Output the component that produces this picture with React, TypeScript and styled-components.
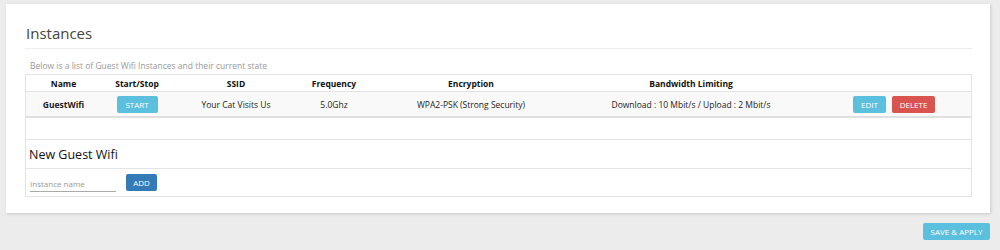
import React from 'react';
import styled, { createGlobalStyle } from 'styled-components';

const GlobalStyle = createGlobalStyle`
  html, body {
    margin: 0;
    padding: 0;
    background: #ececec;
    font-family: "Open Sans", "Liberation Sans", sans-serif;
    color: #222;
  }
`;

const Page = styled.div`
  width: 1000px;
  height: 250px;
  padding: 4px 10px 0 6px;
  box-sizing: border-box;
  display: flex;
  flex-direction: column;
`;

const Card = styled.div`
  background: #fff;
  box-shadow: 1px 1px 3px rgba(0, 0, 0, 0.15);
  padding: 19px 18px 18px 19px;
  height: 209px;
  box-sizing: border-box;
`;

const Title = styled.h2`
  margin: 0;
  font-size: 15px;
  font-weight: 400;
  color: #444;
  line-height: 20px;
  padding-left: 1px;
`;

const Rule = styled.hr`
  border: 0;
  border-top: 1px solid #eee;
  margin: 5px 0 0 0;
`;

const Lead = styled.div`
  font-size: 8.5px;
  color: #999;
  padding: 8px 0 0 5px;
  line-height: 17px;
`;

const Box = styled.div`
  border: 1px solid #e3e3e3;
`;

const Table = styled.table`
  width: 100%;
  table-layout: fixed;
  border-collapse: collapse;
  font-size: 8.5px;
`;

const Th = styled.th`
  font-weight: 700;
  text-align: center;
  height: 16px;
  padding: 0;
  border-bottom: 1px solid #e3e3e3;
  color: #111;
`;

const Row = styled.tr`
  background: #f9f9f9;
  border-bottom: 2px solid #e0e0e0;
`;

const Td = styled.td<{ $bold?: boolean }>`
  text-align: center;
  height: 24px;
  padding: 0;
  font-weight: ${(p) => (p.$bold ? 700 : 400)};
  color: #222;
`;

const Spacer = styled.div`
  height: 21px;
  border-bottom: 1px solid #e3e3e3;
`;

const Section = styled.div`
  height: 28px;
  display: flex;
  align-items: center;
  padding-left: 3px;
  font-size: 12.5px;
  color: #111;
  border-bottom: 1px solid #e3e3e3;
`;

const AddRow = styled.div`
  height: 27px;
  display: flex;
  align-items: center;
  gap: 10px;
  padding-left: 4px;
`;

const Input = styled.input`
  width: 86px;
  height: 14px;
  border: 0;
  border-bottom: 1px solid #aaa;
  font-family: inherit;
  font-size: 8px;
  padding: 0;
  outline: none;
  margin-top: 3px;
  &::placeholder {
    color: #999;
  }
`;

const Button = styled.button<{ $bg: string; $w: number }>`
  background: ${(p) => p.$bg};
  color: #fff;
  border: 0;
  border-radius: 2px;
  height: 17px;
  width: ${(p) => p.$w}px;
  font-family: inherit;
  font-size: 8px;
  padding: 0;
  text-transform: uppercase;
  vertical-align: middle;
`;

const Actions = styled.div`
  display: flex;
  gap: 6px;
  padding-left: 44px;
`;

const Footer = styled.div`
  display: flex;
  justify-content: flex-end;
  padding-top: 10px;
`;

export default function App() {
  return (
    <>
      <GlobalStyle />
      <Page>
        <Card>
          <Title>Instances</Title>
          <Rule />
          <Lead>Below is a list of Guest Wifi Instances and their current state</Lead>
          <Box>
            <Table>
              <colgroup>
                <col style={{ width: 75 }} />
                <col style={{ width: 72 }} />
                <col style={{ width: 126 }} />
                <col style={{ width: 70 }} />
                <col style={{ width: 204 }} />
                <col style={{ width: 236 }} />
                <col />
              </colgroup>
              <thead>
                <tr>
                  <Th>Name</Th>
                  <Th>Start/Stop</Th>
                  <Th>SSID</Th>
                  <Th>Frequency</Th>
                  <Th>Encryption</Th>
                  <Th>Bandwidth Limiting</Th>
                  <Th />
                </tr>
              </thead>
              <tbody>
                <Row>
                  <Td $bold>GuestWifi</Td>
                  <Td>
                    <Button $bg="#5bc0de" $w={41}>Start</Button>
                  </Td>
                  <Td>Your Cat Visits Us</Td>
                  <Td>5.0Ghz</Td>
                  <Td>WPA2-PSK (Strong Security)</Td>
                  <Td>Download : 10 Mbit/s / Upload : 2 Mbit/s</Td>
                  <Td>
                    <Actions>
                      <Button $bg="#5bc0de" $w={33}>Edit</Button>
                      <Button $bg="#d9534f" $w={43}>Delete</Button>
                    </Actions>
                  </Td>
                </Row>
              </tbody>
            </Table>
            <Spacer />
            <Section>New Guest Wifi</Section>
            <AddRow>
              <Input placeholder="Instance name" />
              <Button $bg="#337ab7" $w={31}>Add</Button>
            </AddRow>
          </Box>
        </Card>
        <Footer>
          <Button $bg="#5bc0de" $w={67}>Save &amp; Apply</Button>
        </Footer>
      </Page>
    </>
  );
}
